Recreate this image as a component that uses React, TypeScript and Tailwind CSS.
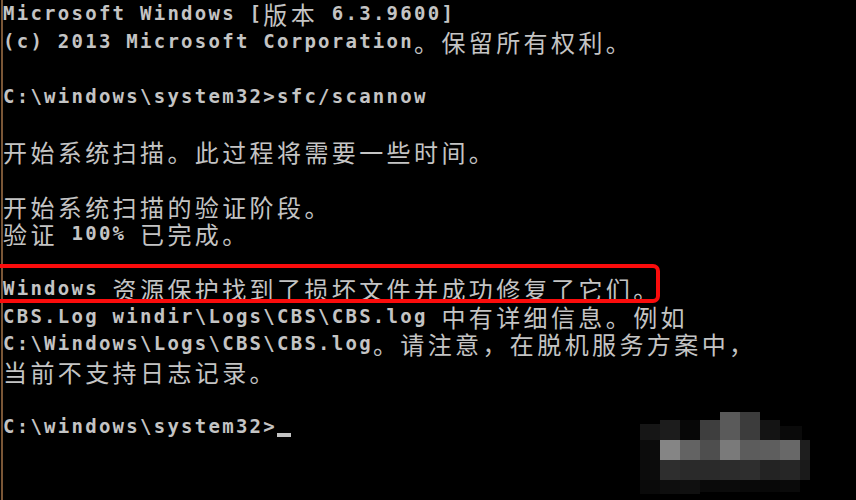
import type { ReactNode } from "react";

const LINES: string[] = [
  "Microsoft Windows [版本 6.3.9600]",
  "(c) 2013 Microsoft Corporation。保留所有权利。",
  "",
  "C:\\windows\\system32>sfc/scannow",
  "",
  "开始系统扫描。此过程将需要一些时间。",
  "",
  "开始系统扫描的验证阶段。",
  "验证 100% 已完成。",
  "",
  "Windows 资源保护找到了损坏文件并成功修复了它们。",
  "CBS.Log windir\\Logs\\CBS\\CBS.log 中有详细信息。例如",
  "C:\\Windows\\Logs\\CBS\\CBS.log。请注意，在脱机服务方案中，",
  "当前不支持日志记录。",
  "",
  "C:\\windows\\system32>",
];

// pixel blocks of the blurred watermark, [x, y, w, h, grey]
const BLUR: [number, number, number, number, string][] = [
  [80, 14, 20, 16, "#161616"],
  [100, 10, 20, 20, "#1c1c1c"],
  [120, 10, 20, 20, "#070707"],
  [140, 10, 20, 20, "#3e3e3e"],
  [160, 2, 20, 28, "#5a5a5a"],
  [180, 2, 20, 28, "#3c3c3c"],
  [200, 10, 20, 20, "#141414"],
  [220, 16, 22, 14, "#0a0a0a"],
  [80, 30, 20, 20, "#0c0c0c"],
  [100, 30, 20, 20, "#858585"],
  [120, 30, 20, 20, "#636363"],
  [140, 30, 20, 20, "#4e4e4e"],
  [160, 30, 20, 20, "#7a7a7a"],
  [180, 30, 20, 20, "#5c5c5c"],
  [200, 30, 20, 20, "#5e5e5e"],
  [220, 30, 20, 20, "#686868"],
  [240, 30, 10, 20, "#1e1e1e"],
  [80, 50, 20, 20, "#0c0c0c"],
  [100, 50, 20, 20, "#2e2e2e"],
  [120, 50, 20, 20, "#2a2a2a"],
  [140, 50, 20, 20, "#2a2a2a"],
  [160, 50, 20, 20, "#2c2c2c"],
  [180, 50, 20, 20, "#2e2e2e"],
  [200, 50, 20, 20, "#232323"],
  [220, 50, 20, 20, "#262626"],
  [240, 50, 10, 20, "#1a1a1a"],
  [80, 70, 20, 14, "#0a0a0a"],
  [100, 70, 20, 14, "#0e0e0e"],
  [120, 70, 20, 14, "#101010"],
  [140, 70, 20, 12, "#0a0a0a"],
  [160, 70, 20, 12, "#0b0b0b"],
  [180, 70, 20, 12, "#090909"],
  [200, 70, 20, 12, "#080808"],
  [220, 70, 20, 12, "#0a0a0a"],
];

function Line({ text, cursor }: { text: string; cursor?: boolean }) {
  const runs = text.match(/[\x00-\x7f]+|[^\x00-\x7f]+/g) || [];
  const parts: ReactNode[] = runs.map((run, i) =>
    /^[\x00-\x7f]/.test(run) ? (
      <span key={i} className="whitespace-pre">
        {run}
      </span>
    ) : (
      <span
        key={i}
        className="whitespace-pre align-[-4px] font-['Noto_Sans_CJK_SC',sans-serif] text-[24px] leading-[20px] font-normal tracking-[3.4px]"
      >
        {run}
      </span>
    )
  );
  return (
    <div className="h-[27.5px] whitespace-nowrap">
      {parts}
      {cursor && <span className="inline-block h-[4px] w-[13.7px] align-[-4px] bg-[#c4c4c4]" />}
    </div>
  );
}

export default function App() {
  return (
    <div className="relative h-[500px] w-[856px] overflow-hidden bg-black pl-px">
      <div className="h-full border-l-2 border-[#7a5636] font-['DejaVu_Sans_Mono',monospace] text-[19px] leading-[27.5px] font-bold tracking-[2.26px] text-[#c4c4c4]">
        {LINES.map((l, i) => (
          <Line key={i} text={l} cursor={i === LINES.length - 1} />
        ))}
      </div>

      {/* red highlight round the result line */}
      <div className="absolute left-[-14px] top-[264px] h-[39px] w-[674px] rounded-[7px] border-4 border-[#fb0c0c]" />

      {/* blurred watermark */}
      <svg className="absolute left-[560px] top-[410px]" width="296" height="90" viewBox="0 0 296 90">
        {BLUR.map(([x, y, w, h, c], i) => (
          <rect key={i} x={x} y={y} width={w} height={h} fill={c} />
        ))}
      </svg>
    </div>
  );
}
